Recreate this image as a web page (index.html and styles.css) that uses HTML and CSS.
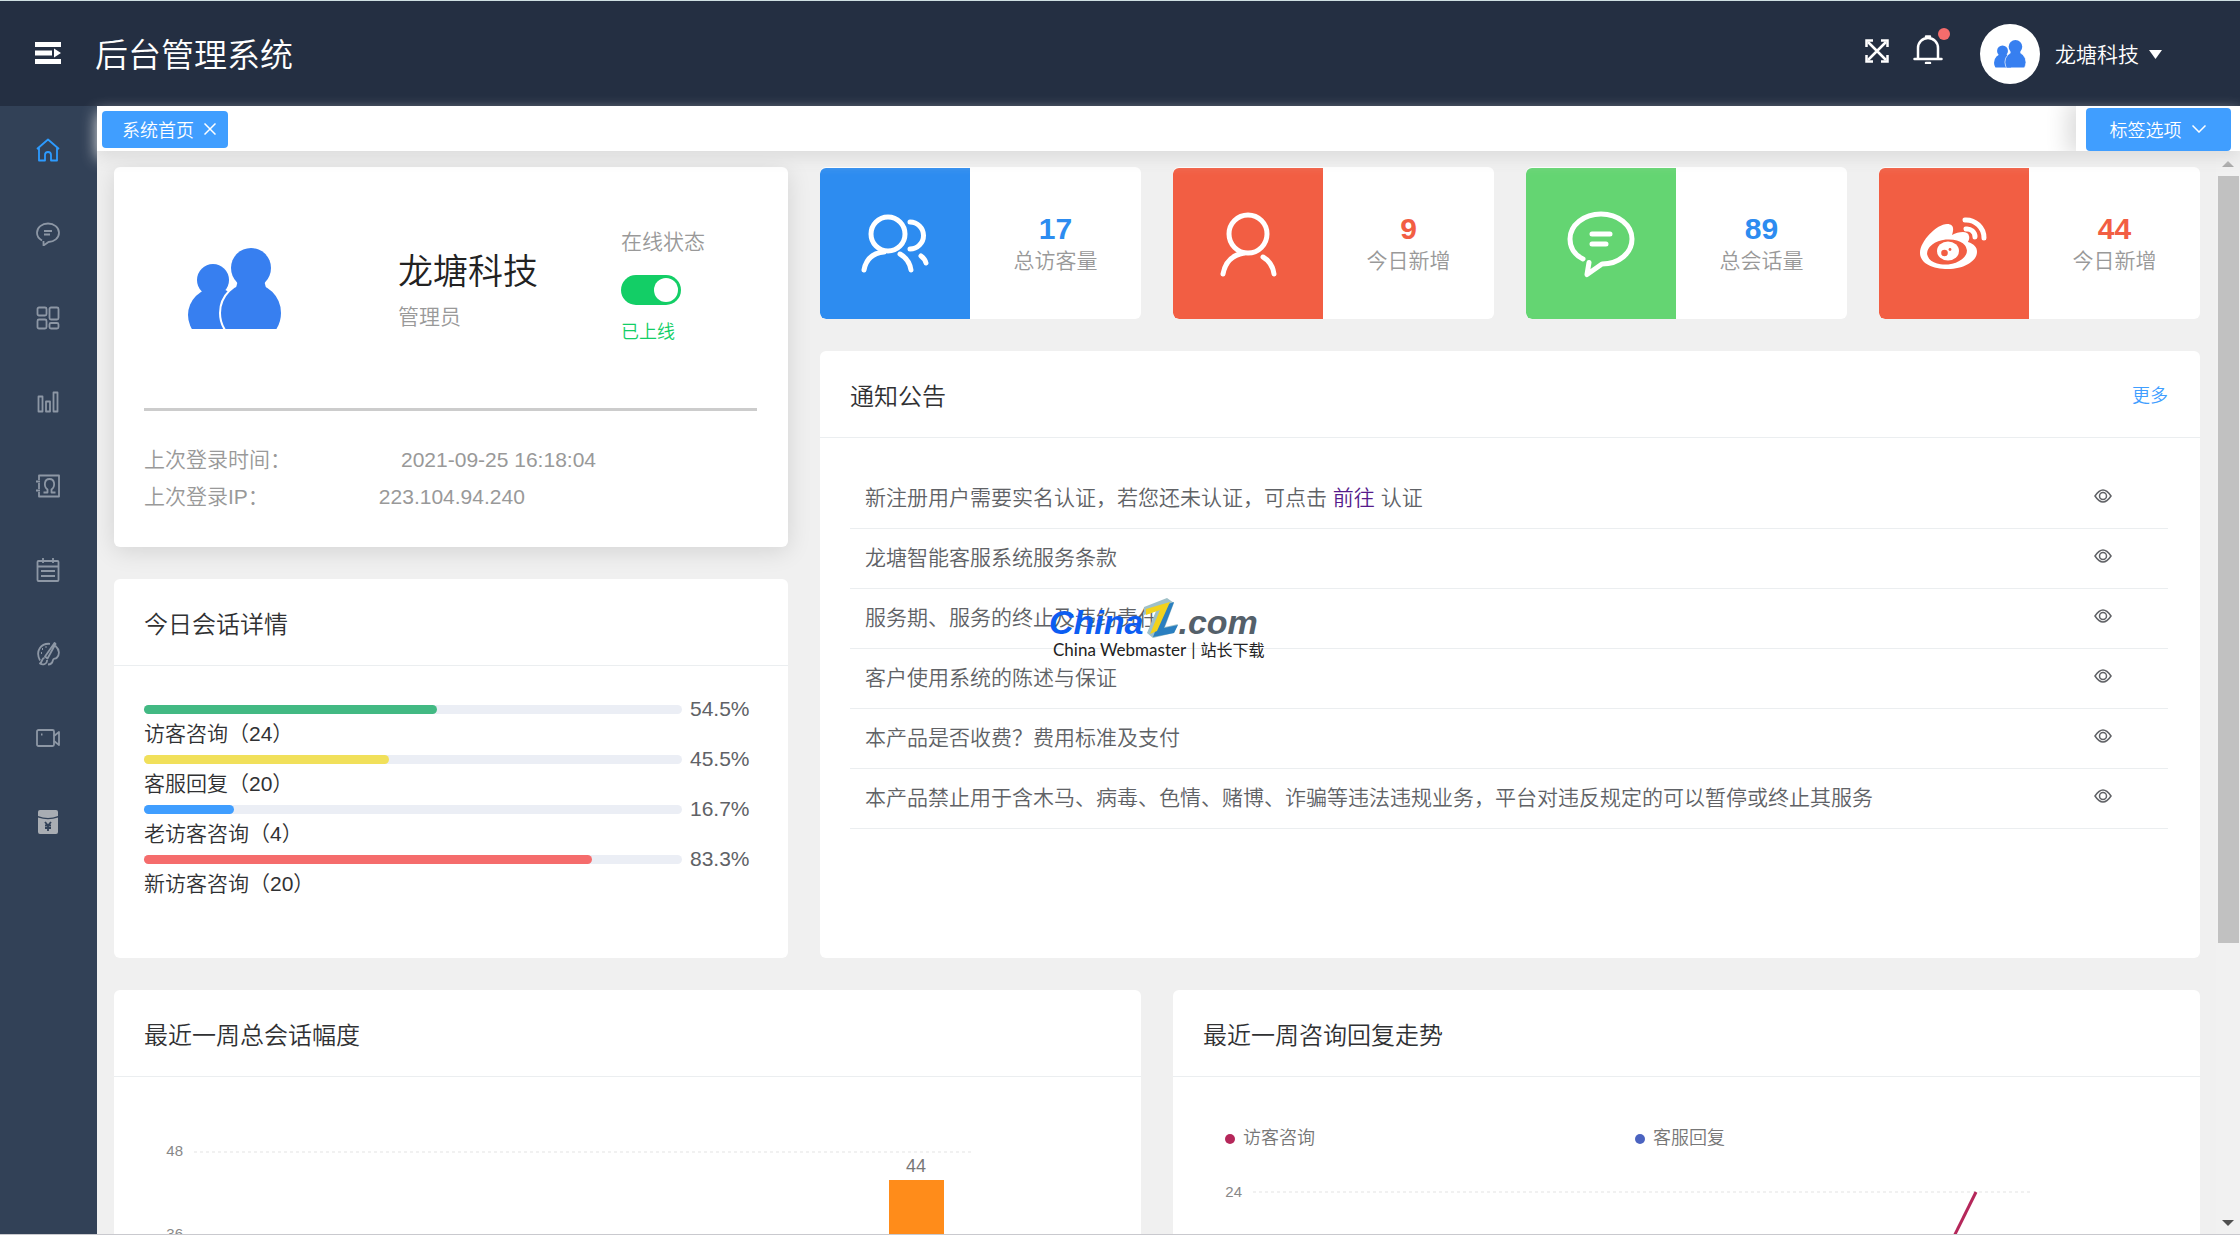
FILE: index.html
```html
<!DOCTYPE html>
<html lang="zh-CN">
<head>
<meta charset="utf-8">
<meta name="viewport" content="width=device-width, initial-scale=1">
<title>后台管理系统</title>
<link rel="stylesheet" href="styles.css">
</head>
<body>
<svg class="sprite" aria-hidden="true">
  <symbol id="people" viewBox="0 0 94 82">
    <clipPath id="people-cut"><rect width="94" height="81"/></clipPath>
    <g clip-path="url(#people-cut)">
      <circle cx="25" cy="32" r="16"/>
      <circle cx="27" cy="67" r="27"/>
      <path d="M15 40h20l2 10H12z"/>
      <circle cx="63" cy="65" r="31" stroke="#fff" stroke-width="2"/>
      <circle cx="63" cy="20" r="20"/>
      <path d="M50 32h26l2 8H48z"/>
    </g>
  </symbol>
  <symbol id="eye" viewBox="0 0 18 14">
    <path d="M1 7C4 2.500 6.500 1 9 1s5 1.500 8 6c-3 4.500-5.500 6-8 6S4 11.500 1 7z"/>
    <circle cx="9" cy="7" r="3.500"/>
  </symbol>
</svg>

<div class="app">
  <header class="header">
    <button class="icon-btn collapse" aria-label="折叠菜单">
      <svg width="26" height="22" viewBox="0 0 26 22" fill="currentColor"><path d="M0 0h26v5H0zM0 8.500h17v5H0zM0 17h26v5H0zM19 6.500l7 4.500-7 4.500z"/></svg>
    </button>
    <h1 class="logo">后台管理系统</h1>
    <div class="header-tools">
      <button class="icon-btn fullscreen" aria-label="全屏">
        <svg width="24" height="24" viewBox="0 0 24 24" fill="none" stroke="currentColor" stroke-width="2.500"><path d="M3 3l18 18M21 3L3 21"/><path d="M1.500 8V1.500H8M16 1.500h6.500V8M22.500 16v6.500H16M8 22.500H1.500V16"/></svg>
      </button>
      <button class="icon-btn bell" aria-label="消息">
        <svg width="30" height="30" viewBox="0 0 30 30" fill="none" stroke="currentColor" stroke-width="2.500" stroke-linecap="round"><path d="M5 25V14a10 10 0 0 1 20 0v11M1.500 25h27"/><path d="M13 2.500h4M13 29h4"/></svg>
        <span class="badge"></span>
      </button>
      <span class="avatar"><svg width="32" height="28"><use href="#people"/></svg></span>
      <button class="user-menu">龙塘科技 <svg width="13" height="10" viewBox="0 0 13 10" fill="currentColor"><path d="M0 0h13L6.500 9z"/></svg></button>
    </div>
  </header>

  <nav class="sidebar" aria-label="主菜单">
    <a class="active" href="#home" aria-label="系统首页"><svg viewBox="0 0 24 24"><path d="M1 11L12 1.500 23 11M3 9.500V22.500h6V17a3 3 0 0 1 6 0v5.500h6V9.500"/></svg></a>
    <a href="#chat" aria-label="会话"><svg viewBox="0 0 24 24"><path d="M6 18.500C3 16.800 1 14 1 10.800 1 5.500 6 1.500 12 1.500s11 4 11 9.300-5 9.200-10.500 9.200L7.500 23.500V19M8 9h8M8 12.500h6"/></svg></a>
    <a href="#apps" aria-label="应用"><svg viewBox="0 0 24 24"><rect x="1.500" y="1.500" width="9" height="8" rx="1.500"/><rect x="13.500" y="1.500" width="9" height="12" rx="1.500"/><rect x="1.500" y="13.500" width="9" height="9" rx="1.500"/><rect x="13.500" y="17" width="9" height="5.500" rx="1.500"/></svg></a>
    <a href="#stats" aria-label="统计"><svg viewBox="0 0 24 24"><path d="M2.500 6.500h4v15h-4zM10 11.500h4v10h-4zM17.500 2.500h4v19h-4z"/></svg></a>
    <a href="#contacts" aria-label="通讯录"><svg viewBox="0 0 24 24"><path d="M3 6V1.500h20v21H3V18M3 9v6M0 7.500h4M0 16.500h4M7.500 18.500h4v-3c-4-3-3.500-10.500 2-10.500s6 7.500 2 10.500v3h4"/></svg></a>
    <a href="#orders" aria-label="工单"><svg viewBox="0 0 24 24"><rect x="1.500" y="3" width="21" height="20" rx="1"/><path d="M1.500 8.500h21M5 13h14M5 18h14M7 0v5M17 0v5"/></svg></a>
    <a href="#theme" aria-label="外观"><svg viewBox="0 0 24 24"><path d="M4 18.500C-1 9 5 1 14 1.800M19.500 4C24 8 23.500 13 21 15.500c-2 2-3.500.5-4 2.500-.4 2-1.500 4.500-5 4.500M18.500 1L9 14.500l2.500 2L19.500 2zM8.500 16c-3 0-1.500 3-4.500 5.500 3 2 7.500.5 7-3.500M5 11h1M6 7h1M9.500 5h1"/></svg></a>
    <a href="#video" aria-label="视频"><svg viewBox="0 0 24 24"><rect x="1" y="4" width="17" height="16" rx="1.500"/><path d="M18 10l5-4v13l-5-4M5 8.500h1.500"/></svg></a>
    <a href="#wallet" aria-label="财务"><svg viewBox="0 0 24 24"><path class="solid" d="M2 2a2 2 0 0 1 2-2h16a2 2 0 0 1 2 2v4Q12 10 2 6z"/><path class="solid" d="M2 7.500Q12 11 22 7.500V22a2 2 0 0 1-2 2H4a2 2 0 0 1-2-2z"/><path class="cut" d="M9 12l3 3.500L15 12M9 15.500h6M9 18h6M12 15.500V21"/></svg></a>
  </nav>

  <div class="tags">
    <ul class="tag-list">
      <li class="tag"><a href="#home">系统首页</a><button class="tag-close" aria-label="关闭"><svg width="12" height="12" viewBox="0 0 12 12" fill="none" stroke="currentColor" stroke-width="1.500"><path d="M.5.5l11 11M11.500.5l-11 11"/></svg></button></li>
    </ul>
    <div class="tag-options">
      <button class="tag-select">标签选项 <svg width="14" height="8" viewBox="0 0 14 8" fill="none" stroke="currentColor" stroke-width="1.500"><path d="M.5.5L7 7 13.500.5"/></svg></button>
    </div>
  </div>

  <main class="content">
    <div class="dashboard">
      <div class="col-left">
        <section class="card profile">
          <div class="profile-top">
            <span class="profile-avatar"><svg width="94" height="82"><use href="#people"/></svg></span>
            <div class="profile-name">
              <h2>龙塘科技</h2>
              <p>管理员</p>
            </div>
            <div class="status">
              <label for="online">在线状态</label>
              <input type="checkbox" role="switch" id="online" class="switch" checked>
              <span class="status-text">已上线</span>
            </div>
          </div>
          <dl class="login-info">
            <div><dt>上次登录时间：</dt><dd>2021-09-25 16:18:04</dd></div>
            <div><dt>上次登录IP：</dt><dd>223.104.94.240</dd></div>
          </dl>
        </section>

        <section class="card grow">
          <div class="card-head"><h3>今日会话详情</h3></div>
          <div class="card-body">
            <div class="progress"><div class="track"><div class="bar green" style="width:54.5%"></div></div><span class="percent">54.5%</span></div>
            <p class="progress-label">访客咨询（24）</p>
            <div class="progress"><div class="track"><div class="bar yellow" style="width:45.5%"></div></div><span class="percent">45.5%</span></div>
            <p class="progress-label">客服回复（20）</p>
            <div class="progress"><div class="track"><div class="bar blue" style="width:16.7%"></div></div><span class="percent">16.7%</span></div>
            <p class="progress-label">老访客咨询（4）</p>
            <div class="progress"><div class="track"><div class="bar red" style="width:83.3%"></div></div><span class="percent">83.3%</span></div>
            <p class="progress-label">新访客咨询（20）</p>
          </div>
        </section>
      </div>

      <div class="col-right">
        <section class="card stat stat-blue">
          <div class="stat-icon"><svg width="72" height="72" viewBox="0 0 72 72"><circle cx="29" cy="26" r="17"/><path d="M5 62C7 51 14 45 25 44M41 46c7 4 10 9 11 16M51 14a13.500 13.500 0 0 1 0 27M62 48q4 3 5 7"/></svg></div>
          <div class="stat-text"><strong>17</strong><span>总访客量</span></div>
        </section>
        <section class="card stat stat-red">
          <div class="stat-icon"><svg width="72" height="72" viewBox="0 0 72 72"><circle cx="36" cy="26" r="19"/><path d="M11 66C13 55 20 47 32 45M51 49c7 4 10 10 11 17"/></svg></div>
          <div class="stat-text"><strong>9</strong><span>今日新增</span></div>
        </section>
        <section class="card stat stat-green">
          <div class="stat-icon"><svg width="72" height="72" viewBox="0 0 72 72"><path d="M18 51C10 47 5 40 5 31 5 17 19 6 36 6s31 11 31 25-13 25-30 25L22 66.500l2-12M27 26h18M27 36h14"/></svg></div>
          <div class="stat-text"><strong>89</strong><span>总会话量</span></div>
        </section>
        <section class="card stat stat-red">
          <div class="stat-icon"><svg class="weibo" width="68" height="54" viewBox="0 0 68 54"><path fill="#fff" stroke="none" d="M0 36C0 24 17 7 27 7c7 0 7 5 5 11 6-3 16-5 17 1 1 3-1 5-1 6 6 2 9 5 9 10 0 9-13 17-29 17S0 46 0 36z"/><ellipse class="hole" cx="27" cy="35" rx="20" ry="12.500" transform="rotate(-6 27 35)"/><ellipse cx="28" cy="34" rx="11" ry="9.500" fill="#fff" stroke="none"/><circle class="hole" cx="24.500" cy="36" r="3.300"/><circle class="hole" cx="30" cy="32.500" r="1.400"/><path d="M45 3a18 18 0 0 1 19 18M46 12a8 8 0 0 1 9 8"/></svg></div>
          <div class="stat-text"><strong>44</strong><span>今日新增</span></div>
        </section>

        <section class="card notice">
          <div class="card-head"><h3>通知公告</h3><a class="more" href="#more">更多</a></div>
          <div class="card-body">
            <table class="notice-table">
              <tbody>
                <tr><td>新注册用户需要实名认证，若您还未认证，可点击 <a class="visited" href="#verify">前往</a> 认证</td><td class="view"><svg width="18" height="14"><use href="#eye"/></svg></td></tr>
                <tr><td>龙塘智能客服系统服务条款</td><td class="view"><svg width="18" height="14"><use href="#eye"/></svg></td></tr>
                <tr><td>服务期、服务的终止及违约责任</td><td class="view"><svg width="18" height="14"><use href="#eye"/></svg></td></tr>
                <tr><td>客户使用系统的陈述与保证</td><td class="view"><svg width="18" height="14"><use href="#eye"/></svg></td></tr>
                <tr><td>本产品是否收费？费用标准及支付</td><td class="view"><svg width="18" height="14"><use href="#eye"/></svg></td></tr>
                <tr><td>本产品禁止用于含木马、病毒、色情、赌博、诈骗等违法违规业务，平台对违反规定的可以暂停或终止其服务</td><td class="view"><svg width="18" height="14"><use href="#eye"/></svg></td></tr>
              </tbody>
            </table>
          </div>
          <div class="watermark">
            <div class="wm-name"><span class="wm-blue">China</span><svg width="38" height="40" viewBox="0 0 38 40"><path fill="#9fc0c8" d="M3 9L26 0l7 5-9 24 13-3-4 9-21 5-6-5 9-22-12 4z"/><path fill="#2a7fc0" d="M24 7l9-3-10 26 14-3-4 8-21 4z"/><path fill="#f2d21c" d="M5 11L29 4 16 33l-7 3 10-24-14 5z"/></svg><span class="wm-gray">.com</span></div>
            <div class="wm-sub"><span>China Webmaster</span><span>|</span><span class="wm-cn">站长下载</span></div>
          </div>
        </section>
      </div>

      <section class="card chart">
        <div class="card-head"><h3>最近一周总会话幅度</h3></div>
        <div class="card-body">
          <svg class="plot" width="900" height="460" viewBox="0 0 900 460">
            <g class="grid"><path d="M50 45H827M50 128H827M50 211H827M50 294H827M50 377H827"/></g>
            <g class="axis"><text x="39" y="49">48</text><text x="39" y="132">36</text><text x="39" y="215">24</text><text x="39" y="298">12</text><text x="39" y="381">0</text></g>
            <rect x="745" y="73" width="55" height="304" fill="#ff8c1a"/>
            <text class="value" x="772" y="65">44</text>
          </svg>
        </div>
      </section>

      <section class="card chart">
        <div class="card-head"><h3>最近一周咨询回复走势</h3></div>
        <div class="card-body">
          <svg class="plot" width="900" height="460" viewBox="0 0 900 460">
            <circle cx="27" cy="32" r="5" fill="#b5275a"/><text class="legend" x="40" y="37">访客咨询</text>
            <circle cx="437" cy="32" r="5" fill="#4b63c0"/><text class="legend" x="450" y="37">客服回复</text>
            <g class="grid"><path d="M50 85H828M50 158H828M50 231H828M50 304H828M50 377H828"/></g>
            <g class="axis"><text x="39" y="90">24</text><text x="39" y="163">18</text><text x="39" y="236">12</text><text x="39" y="309">6</text><text x="39" y="382">0</text></g>
            <path d="M660 313L773 85" fill="none" stroke="#b5275a" stroke-width="3"/>
          </svg>
        </div>
      </section>
    </div>
    <div class="scrollbar" aria-hidden="true"><span class="arrow-up"></span><span class="thumb"></span><span class="arrow-down"></span></div>
  </main>
</div>
</body>
</html>
```
FILE: styles.css
```css
* { box-sizing: border-box; margin: 0; padding: 0; }

body {
  font-family: "Liberation Sans", "Noto Sans CJK SC", sans-serif;
  font-size: 21px;
  font-weight: 350;
  color: #303133;
  background: #f0f0f0;
}

a { color: inherit; text-decoration: none; }
ul { list-style: none; }
button { font: inherit; color: inherit; background: none; border: 0; cursor: pointer; }
svg { display: block; flex: none; }
.sprite { position: absolute; width: 0; height: 0; }

.app {
  display: grid;
  grid-template: auto auto minmax(0, 1fr) / 97px minmax(0, 1fr);
  height: 100vh;
  overflow: hidden;
  border-bottom: 1px solid #c9c9ce;
}

/* header */
.header {
  grid-column: 1 / -1;
  display: flex;
  align-items: center;
  height: 106px;
  padding: 0 78px 2px 35px;
  color: #fff;
  background: #242f42;
  border-top: 1px solid #cfe0e2;
}
.logo { margin-left: 34px; font-size: 33px; font-weight: 350; }
.header-tools { display: flex; align-items: center; margin-left: auto; }
.fullscreen { margin-bottom: 4px; }
.bell { position: relative; margin: 0 37px 8px 24px; }
.badge {
  position: absolute;
  top: -6px;
  right: -7px;
  width: 12px;
  height: 12px;
  border-radius: 50%;
  background: #f56c6c;
}
.avatar {
  display: flex;
  align-items: center;
  justify-content: center;
  width: 60px;
  height: 60px;
  margin-top: 2px;
  border-radius: 50%;
  background: #fff;
  fill: #377ff0;
}
.user-menu { display: flex; align-items: center; gap: 10px; margin-left: 15px; }
.user-menu svg { margin-top: 4px; }

/* sidebar */
.sidebar {
  grid-row: 2 / 4;
  display: flex;
  flex-direction: column;
  padding: 2px 2px 0 0;
  background: #324157;
}
.sidebar a {
  display: flex;
  align-items: center;
  justify-content: center;
  height: 84px;
  color: #8d97a5;
}
.sidebar a.active { color: #2d9bff; }
.sidebar svg {
  width: 24px;
  height: 24px;
  fill: none;
  stroke: currentColor;
  stroke-width: 1.8;
  stroke-linejoin: round;
}
.sidebar .solid { fill: #a9adb3; stroke: none; }
.sidebar .cut { stroke: #324157; }

/* tab strip */
.tags {
  position: relative;
  z-index: 1;
  display: flex;
  justify-content: space-between;
  height: 45px;
  background: #fff;
  box-shadow: 0 7px 15px #ddd;
}
.tag-list { display: flex; flex: 1; padding: 5px; overflow: hidden; }
.tag {
  display: flex;
  align-items: center;
  gap: 10px;
  height: 37px;
  padding: 0 12px 2px 20px;
  font-size: 18px;
  color: #fff;
  background: #409eff;
  border-radius: 4px;
}
.tag-options {
  display: flex;
  justify-content: center;
  width: 164px;
  padding: 2px 9px 0 10px;
  background: #fff;
  box-shadow: -5px 0 22px 4px #ddd;
  clip-path: inset(0 0 0 -40px);
}
.tag-select {
  display: flex;
  align-items: center;
  justify-content: center;
  gap: 10px;
  width: 100%;
  padding: 0 2px 2px 0;
  font-size: 18px;
  color: #fff;
  background: #409eff;
  border-radius: 4px;
}

/* page */
.content { display: flex; overflow: hidden; background: #f0f0f0; }
.dashboard {
  flex: 1;
  display: grid;
  grid-template-columns: repeat(6, minmax(0, 1fr));
  gap: 32px;
  align-content: start;
  padding: 16px 16px 32px 17px;
}
.col-left { grid-column: span 2; display: flex; flex-direction: column; gap: 32px; }
.col-right {
  grid-column: span 4;
  display: grid;
  grid-template: auto 1fr / repeat(4, minmax(0, 1fr));
  gap: 32px;
}
.card { background: #fff; border-radius: 6px; }
.grow { flex: 1; }
.card-head {
  display: flex;
  align-items: center;
  justify-content: space-between;
  height: 87px;
  padding: 0 32px 0 30px;
  border-bottom: 1px solid #ebeef0;
}
.card-head h3 { font-size: 24px; font-weight: 350; }
.card-body { padding: 30px; }
.more { font-size: 18px; color: #409eff; }

/* profile */
.profile { padding: 30px 31px 32px 30px; box-shadow: 0 4px 24px rgba(0, 0, 0, .12); }
.profile-top {
  display: grid;
  grid-template-columns: 180px 1fr 136px;
  align-items: center;
  padding-bottom: 31px;
  border-bottom: 3px solid #ccc;
}
.profile-avatar {
  display: flex;
  align-items: center;
  justify-content: center;
  height: 180px;
  padding: 4px 0 0 2px;
  fill: #377ff0;
}
.profile-name { padding: 10px 0 0 74px; color: #999; }
.profile-name h2 { font-size: 35px; font-weight: 350; line-height: 50px; color: #222; }
.profile-name p { line-height: 40px; }
.status { display: flex; flex-direction: column; align-items: flex-start; line-height: 30px; color: #999; }
.switch {
  appearance: none;
  width: 60px;
  height: 30px;
  margin: 18px 0 12px;
  padding: 3px;
  border-radius: 15px;
  background: #dcdfe6;
}
.switch::before {
  content: "";
  display: block;
  width: 24px;
  height: 24px;
  border-radius: 50%;
  background: #fff;
}
.switch:checked { background: #13ce66; }
.switch:checked::before { margin-left: auto; }
.status-text { font-size: 18px; color: #13ce66; }
.login-info { padding-top: 30px; line-height: 37px; color: #999; }
.login-info div { display: flex; gap: 110px; }

/* conversation progress */
.progress { display: flex; align-items: center; gap: 8px; height: 26px; }
.track { flex: 1; height: 9px; border-radius: 5px; background: #ebeef5; }
.bar { height: 9px; border-radius: 5px; }
.green { background: #42b983; }
.yellow { background: #f1e05a; }
.blue { background: #409eff; }
.red { background: #f56c6c; }
.percent { width: 68px; color: #606266; }
.progress-label { line-height: 24px; }

/* counters */
.stat { display: flex; height: 152px; padding-top: 1px; overflow: hidden; }
.stat-icon {
  display: flex;
  align-items: center;
  justify-content: center;
  width: 150px;
  border-radius: 6px 0 0 6px;
  background: var(--tone);
}
.stat-icon svg { fill: none; stroke: #fff; stroke-width: 5; stroke-linecap: round; stroke-linejoin: round; }
.stat-icon .hole { fill: var(--tone); stroke: none; }
.stat-text {
  flex: 1;
  display: flex;
  flex-direction: column;
  align-items: center;
  justify-content: center;
  color: #999;
}
.stat-text strong { font-size: 30px; font-weight: 700; line-height: 34px; color: var(--num); }
.stat-text span { line-height: 30px; }
.stat-blue { --tone: #2d8cf0; --num: #2d8cf0; }
.stat-red { --tone: #f25e43; --num: #f25e43; }
.stat-green { --tone: #64d572; --num: #2d8cf0; }

/* notices */
.notice { position: relative; grid-column: 1 / -1; min-height: 607px; }
.notice .card-body { padding-right: 32px; }
.notice-table { width: 100%; border-collapse: collapse; color: #606266; }
.notice-table td { height: 60px; padding: 0 0 4px 15px; border-bottom: 1px solid #ebeef0; }
.notice-table .view { width: 90px; padding-left: 16px; }
.view svg { fill: none; stroke: #606266; stroke-width: 1.5; }
.visited { color: #551a8b; }

.watermark { position: absolute; left: 229px; top: 247px; font-weight: 400; }
.wm-name { display: flex; align-items: flex-end; font: italic bold 34px/36px "Liberation Sans", sans-serif; }
.wm-name svg { margin: 0 -1px 2px -2px; }
.wm-blue { color: #0c5df2; }
.wm-gray { color: #54606a; }
.wm-sub { display: flex; gap: 5px; padding-left: 4px; font: 17px/20px Lato, "Noto Sans CJK SC", sans-serif; color: #222; }
.wm-cn { font-size: 16px; }

/* charts */
.chart { grid-column: span 3; }
.plot { max-width: 100%; }
.grid path { fill: none; stroke: #e3e3e3; stroke-width: 1; stroke-dasharray: 3 3; }
.axis text { font-size: 15px; text-anchor: end; fill: #888; }
.value { font-size: 18px; text-anchor: middle; fill: #777; }
.legend { font-size: 18px; fill: #777; }

/* scroll indicator */
.scrollbar {
  display: flex;
  flex-direction: column;
  align-items: center;
  width: 24px;
  padding: 10px 1px 8px;
  background: #f1f1f1;
}
.arrow-up, .arrow-down { border: 6px solid transparent; }
.arrow-up { border-top: 0; border-bottom-color: #a3a3a3; }
.arrow-down { margin-top: auto; border-bottom: 0; border-top-color: #505050; }
.thumb { width: 21px; height: 72%; margin-top: 9px; background: #c1c1c1; }
```
